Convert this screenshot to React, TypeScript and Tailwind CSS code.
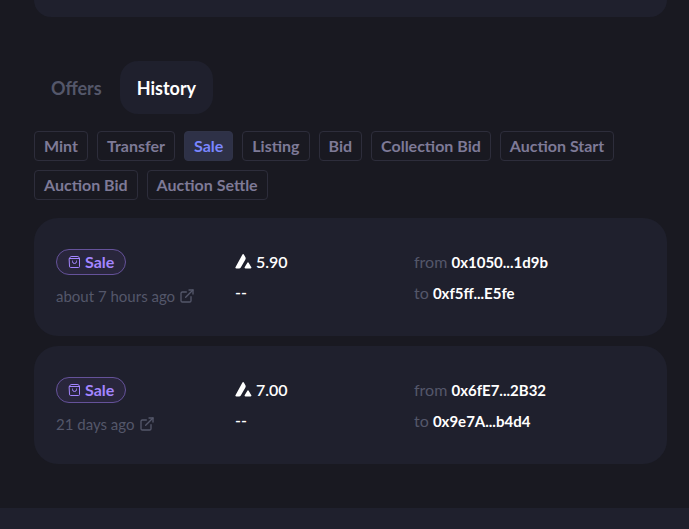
import { useState } from 'react';
import { FiExternalLink } from 'react-icons/fi';

const TABS = ['Offers', 'History'];

const FILTERS = [
  'Mint',
  'Transfer',
  'Sale',
  'Listing',
  'Bid',
  'Collection Bid',
  'Auction Start',
  'Auction Bid',
  'Auction Settle',
];

type Sale = { time: string; price: string; from: string; to: string };

const SALES: Sale[] = [
  { time: 'about 7 hours ago', price: '5.90', from: '0x1050...1d9b', to: '0xf5ff...E5fe' },
  { time: '21 days ago', price: '7.00', from: '0x6fE7...2B32', to: '0x9e7A...b4d4' },
];

export default function App() {
  const [tab, setTab] = useState('History');
  const [filter, setFilter] = useState('Sale');

  return (
    <div className="flex min-h-screen flex-col bg-[#191921] font-['Lato',sans-serif] text-base text-white">
      <main className="pl-[34px] pr-[22px] pb-11">
        <div className="h-[17px] rounded-b-[18px] bg-[#1f202d]" />

        <div className="mt-11 flex gap-px">
          {TABS.map((name) => (
            <button
              key={name}
              onClick={() => setTab(name)}
              className={`h-[53px] rounded-[18px] px-[17px] text-lg font-bold ${
                tab === name ? 'bg-[#1f202d] text-white' : 'text-[#54576a]'
              }`}
            >
              {name}
            </button>
          ))}
        </div>

        <div className="mt-[17px] flex flex-wrap gap-[9px]">
          {FILTERS.map((name) => (
            <button
              key={name}
              onClick={() => setFilter(name)}
              className={`h-[30px] rounded border px-[9px] text-base leading-5 font-bold ${
                filter === name
                  ? 'border-[#303347] bg-[#2e3147] text-[#7a86ff]'
                  : 'border-[#2d2d3b] text-[#7e7a97]'
              }`}
            >
              {name}
            </button>
          ))}
        </div>

        <div className="mt-[18px] flex flex-col gap-[10px]">
          {SALES.map((sale) => (
            <SaleCard key={sale.time} sale={sale} />
          ))}
        </div>
      </main>

      <footer className="min-h-[21px] flex-1 bg-[#1f202d]" />
    </div>
  );
}

function SaleCard({ sale }: { sale: Sale }) {
  return (
    <div className="grid grid-cols-[31fr_31fr_40fr] rounded-[24px] bg-[#1f202d] px-[22px] pt-[31px] pb-7">
      <div className="flex flex-col items-start gap-[9px]">
        <span className="flex h-[26px] items-center gap-1 rounded-full border border-[#65529a] bg-[#29263c] px-[11px] font-bold text-[#a385ff]">
          <BagIcon />
          Sale
        </span>
        <a href="#" className="flex items-center gap-1 text-[15px] leading-6 text-[#54576a]">
          {sale.time}
          <FiExternalLink size={16} />
        </a>
      </div>

      <div className="flex flex-col gap-[6px] font-semibold">
        <div className="flex h-[25px] items-center gap-1">
          <AvaxIcon />
          {sale.price}
        </div>
        <div className="leading-6">--</div>
      </div>

      <div className="flex flex-col gap-[6px]">
        <div className="leading-[25px] text-[#54576a]">
          from <span className="text-[15px] font-bold text-white">{sale.from}</span>
        </div>
        <div className="leading-6 text-[#54576a]">
          to <span className="text-[15px] font-bold text-white">{sale.to}</span>
        </div>
      </div>
    </div>
  );
}

function BagIcon() {
  return (
    <svg width="13" height="14" viewBox="0 0 13 14" fill="none" stroke="currentColor" strokeLinecap="round" strokeLinejoin="round" aria-hidden="true">
      <path d="M1.500 3.500h10v8a1 1 0 0 1-1 1h-8a1 1 0 0 1-1-1z" />
      <path d="M1.500 3.500l.8-1.600a1 1 0 0 1 .8-.4h6.800a1 1 0 0 1 .8.400l.8 1.600" />
      <path d="M4.500 6v.5a2 2 0 0 0 4 0V6" />
    </svg>
  );
}

function AvaxIcon() {
  return (
    <svg width="17" height="15" viewBox="0 0 17 15" fill="currentColor" aria-hidden="true">
      <path d="M7.300.7c.5-.9 1.200-.9 1.700 0l1.400 2.500c.4.7.4 1.500 0 2.200L5.800 13.500c-.4.7-1 1-1.800 1H1.500c-1 0-1.400-.6-.9-1.500z" />
      <path d="M12.200 9c.5-.9 1.100-.9 1.600 0l2.400 4.100c.5.9.2 1.400-.8 1.400h-4.800c-1 0-1.300-.5-.8-1.400z" />
    </svg>
  );
}
